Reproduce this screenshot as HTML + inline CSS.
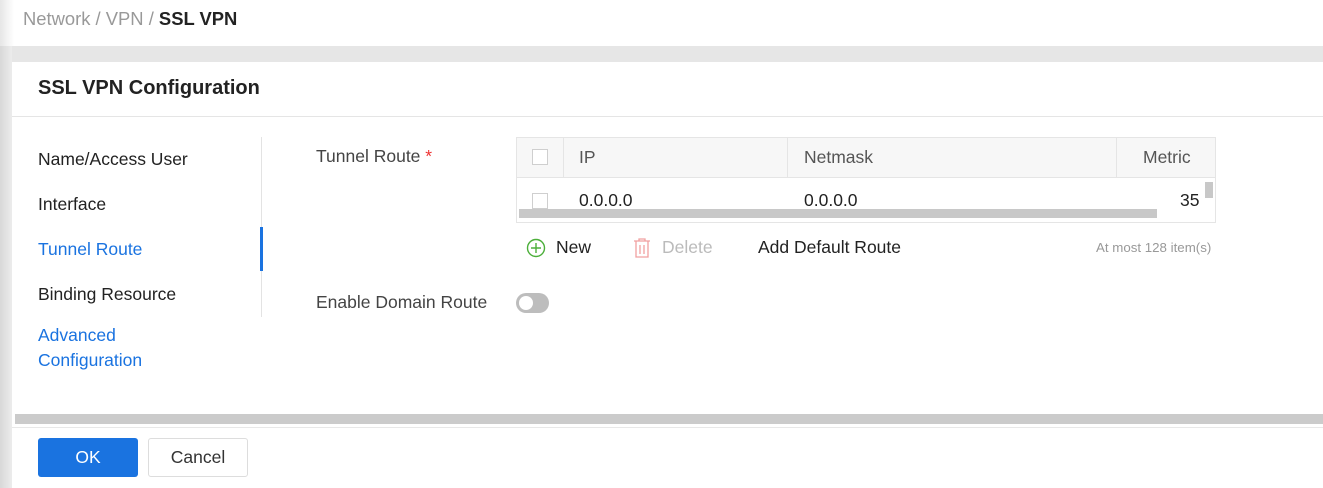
<!DOCTYPE html>
<html><head><style>
*{margin:0;padding:0;box-sizing:border-box}
body{width:1323px;height:488px;overflow:hidden;background:#fff;font-family:"Liberation Sans",Arial,sans-serif;position:relative;color:#333;font-size:17.5px}
.a{position:absolute}
.cb{position:absolute;width:16px;height:16px;border:1px solid #cfcfcf;background:#fff}
</style></head><body>
<div class="a" style="left:0;top:0;width:14px;height:46px;background:linear-gradient(90deg,#e6e6e6,#fff)"></div>
<div class="a" style="left:23px;top:8px;font-size:18.4px;color:#999">Network / VPN / <b style="color:#222">SSL VPN</b></div>
<div class="a" style="left:0;top:46px;width:1323px;height:16px;background:#e6e6e6"></div>
<div class="a" style="left:0;top:46px;width:12px;height:442px;background:linear-gradient(90deg,#d8d8d8,#ececec)"></div>
<div class="a" style="left:38px;top:77px;font-size:20px;font-weight:bold;color:#222">SSL VPN Configuration</div>
<div class="a" style="left:12px;top:116px;width:1311px;height:1px;background:#e5e5e5"></div>
<div class="a" style="left:38px;top:149px;color:#222">Name/Access User</div>
<div class="a" style="left:38px;top:194px;color:#222">Interface</div>
<div class="a" style="left:38px;top:239px;color:#1a73e0">Tunnel Route</div>
<div class="a" style="left:38px;top:284px;color:#222">Binding Resource</div>
<div class="a" style="left:38px;top:323px;color:#1a73e0;line-height:25px">Advanced<br>Configuration</div>
<div class="a" style="left:261px;top:137px;width:1px;height:180px;background:#e3e3e3"></div>
<div class="a" style="left:260px;top:227px;width:3px;height:44px;background:#1a73e0"></div>
<div class="a" style="left:316px;top:146px;color:#444">Tunnel Route <span style="color:#e33">*</span></div>
<div class="a" style="left:516px;top:137px;width:700px;height:86px;border:1px solid #e5e5e5"></div>
<div class="a" style="left:517px;top:138px;width:698px;height:40px;background:#f7f7f7;border-bottom:1px solid #e5e5e5"></div>
<div class="a" style="left:563px;top:138px;width:1px;height:40px;background:#e5e5e5"></div>
<div class="a" style="left:787px;top:138px;width:1px;height:40px;background:#e5e5e5"></div>
<div class="a" style="left:1116px;top:138px;width:1px;height:40px;background:#e5e5e5"></div>
<div class="cb" style="left:532px;top:149px"></div>
<div class="a" style="left:579px;top:147px;color:#555">IP</div>
<div class="a" style="left:804px;top:147px;color:#555">Netmask</div>
<div class="a" style="left:1143px;top:147px;color:#555">Metric</div>
<div class="a" style="left:517px;top:179px;width:698px;height:30px;overflow:hidden">
<div class="cb" style="left:15px;top:14px"></div>
<div class="a" style="left:62px;top:11px;color:#222">0.0.0.0</div>
<div class="a" style="left:287px;top:11px;color:#222">0.0.0.0</div>
<div class="a" style="left:663px;top:11px;color:#222">35</div>
</div>
<div class="a" style="left:1205px;top:182px;width:8px;height:16px;background:#c8c8c8"></div>
<div class="a" style="left:519px;top:209px;width:638px;height:9px;background:#c8c8c8"></div>
<svg class="a" style="left:526px;top:238px" width="20" height="20" viewBox="0 0 20 20"><circle cx="10" cy="10" r="8.5" fill="none" stroke="#4caf3a" stroke-width="1.4"/><path d="M10 5v10M5 10h10" stroke="#4caf3a" stroke-width="1.4"/></svg>
<div class="a" style="left:556px;top:237px;color:#222">New</div>
<svg class="a" style="left:632px;top:237px" width="20" height="22" viewBox="0 0 20 22"><path d="M2 4h16M7 4V2h6v2M4 4v16h12V4M8 8v9M12 8v9" fill="none" stroke="#f0a0a0" stroke-width="1.3"/></svg>
<div class="a" style="left:662px;top:237px;color:#bbb">Delete</div>
<div class="a" style="left:758px;top:237px;color:#222">Add Default Route</div>
<div class="a" style="left:1096px;top:240px;font-size:13.3px;color:#999">At most 128 item(s)</div>
<div class="a" style="left:316px;top:292px;color:#444">Enable Domain Route</div>
<div class="a" style="left:516px;top:293px;width:33px;height:20px;border-radius:10px;background:#bdbdbd"></div>
<div class="a" style="left:519px;top:296px;width:14px;height:14px;border-radius:7px;background:#fff"></div>
<div class="a" style="left:15px;top:414px;width:1308px;height:10px;background:#cbcbcb"></div>
<div class="a" style="left:12px;top:427px;width:1311px;height:1px;background:#e8e8e8"></div>
<div class="a" style="left:38px;top:438px;width:100px;height:39px;background:#1a73e0;border-radius:3px;color:#fff;text-align:center;line-height:39px">OK</div>
<div class="a" style="left:148px;top:438px;width:100px;height:39px;border:1px solid #ddd;border-radius:3px;color:#333;text-align:center;line-height:37px">Cancel</div>
</body></html>
